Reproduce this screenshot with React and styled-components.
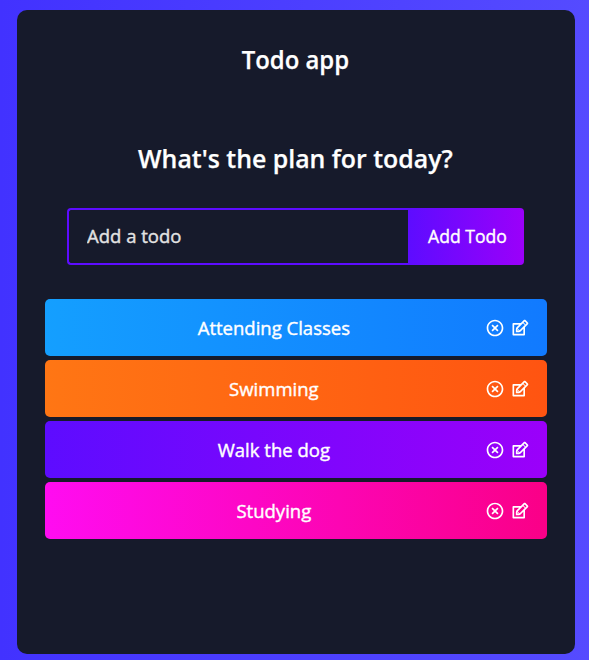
import React from 'react';
import styled, { createGlobalStyle } from 'styled-components';
import { RiCloseCircleLine } from 'react-icons/ri';
import { TiEdit } from 'react-icons/ti';

const Global = createGlobalStyle`
  * { box-sizing: border-box; margin: 0; padding: 0; }
  body {
    height: 660px;
    overflow: hidden;
    background: linear-gradient(90deg, #4232ff 0%, #554bff 100%);
    font-family: 'Trebuchet MS', 'Open Sans', sans-serif;
    color: #fff;
  }
`;

const Page = styled.div`
  height: 660px;
  padding: 10px 14.5px 6px 16.7px;
`;

const Panel = styled.main`
  height: 644px;
  border-radius: 10px;
  background: #161a2b;
  padding: 0 28px;
  text-align: center;
`;

const Line = styled.span`
  display: inline-block;
  white-space: nowrap;
  transform: scaleX(${(p) => p.$sx || 1});
`;

const Title = styled.h1`
  padding-top: 31px;
  font-size: 26px;
  line-height: 36px;
  font-weight: 600;
  -webkit-text-stroke: 0.25px #fff;
`;

const Question = styled(Title)`
  padding-top: 63px;
`;

const Form = styled.form`
  display: flex;
  width: 457px;
  height: 57px;
  margin: 32px auto 34px 22.3px;
`;

const Input = styled.input`
  width: 341px;
  padding: 0 18px 2px;
  border: 2px solid #5d0cff;
  border-right: 0;
  border-radius: 4px 0 0 4px;
  outline: none;
  background: transparent;
  color: #fff;
  font: 500 18.5px 'Trebuchet MS', 'Open Sans', sans-serif;
  &::placeholder {
    color: #e2e2e2;
    opacity: 1;
    -webkit-text-stroke: 0.4px #e2e2e2;
  }
`;

const AddButton = styled.button`
  width: 116px;
  padding: 0 0 2px 2px;
  border: 0;
  border-radius: 0 4px 4px 0;
  background: linear-gradient(90deg, #5d0cff 0%, #9b00fa 100%);
  color: #fff;
  font: 500 18.5px 'Trebuchet MS', 'Open Sans', sans-serif;
  -webkit-text-stroke: 0.4px #fff;
`;

const List = styled.ul`
  display: grid;
  gap: 4px;
  list-style: none;
`;

const Row = styled.li`
  display: grid;
  grid-template-columns: 1fr auto;
  align-items: center;
  height: 57px;
  padding: 0 16.5px 0 18px;
  border-radius: 5px;
  background: linear-gradient(90deg, ${(p) => p.$from} 0%, ${(p) => p.$to} 100%);
  font-size: 18.5px;
  font-weight: 500;
`;

const Label = styled.span`
  -webkit-text-stroke: 0.4px #fff;
`;

const Icons = styled.span`
  display: flex;
  gap: 5px;
  font-size: 20px;
`;

const todos = [
  { text: 'Attending Classes', from: '#149fff', to: '#117aff' },
  { text: 'Swimming', from: '#ff7614', to: '#ff5411' },
  { text: 'Walk the dog', from: '#5d0cff', to: '#9b00fa' },
  { text: 'Studying', from: '#ff0cf1', to: '#fa0087' },
];

export default function App() {
  return (
    <Page>
      <Global />
      <Panel>
        <Title><Line $sx={0.92}>Todo app</Line></Title>
        <Question><Line $sx={0.957}>What's the plan for today?</Line></Question>
        <Form>
          <Input placeholder="Add a todo" />
          <AddButton type="button"><Line $sx={0.95}>Add Todo</Line></AddButton>
        </Form>
        <List>
          {todos.map((t) => (
            <Row key={t.text} $from={t.from} $to={t.to}>
              <Label>{t.text}</Label>
              <Icons><RiCloseCircleLine /><TiEdit /></Icons>
            </Row>
          ))}
        </List>
      </Panel>
    </Page>
  );
}
